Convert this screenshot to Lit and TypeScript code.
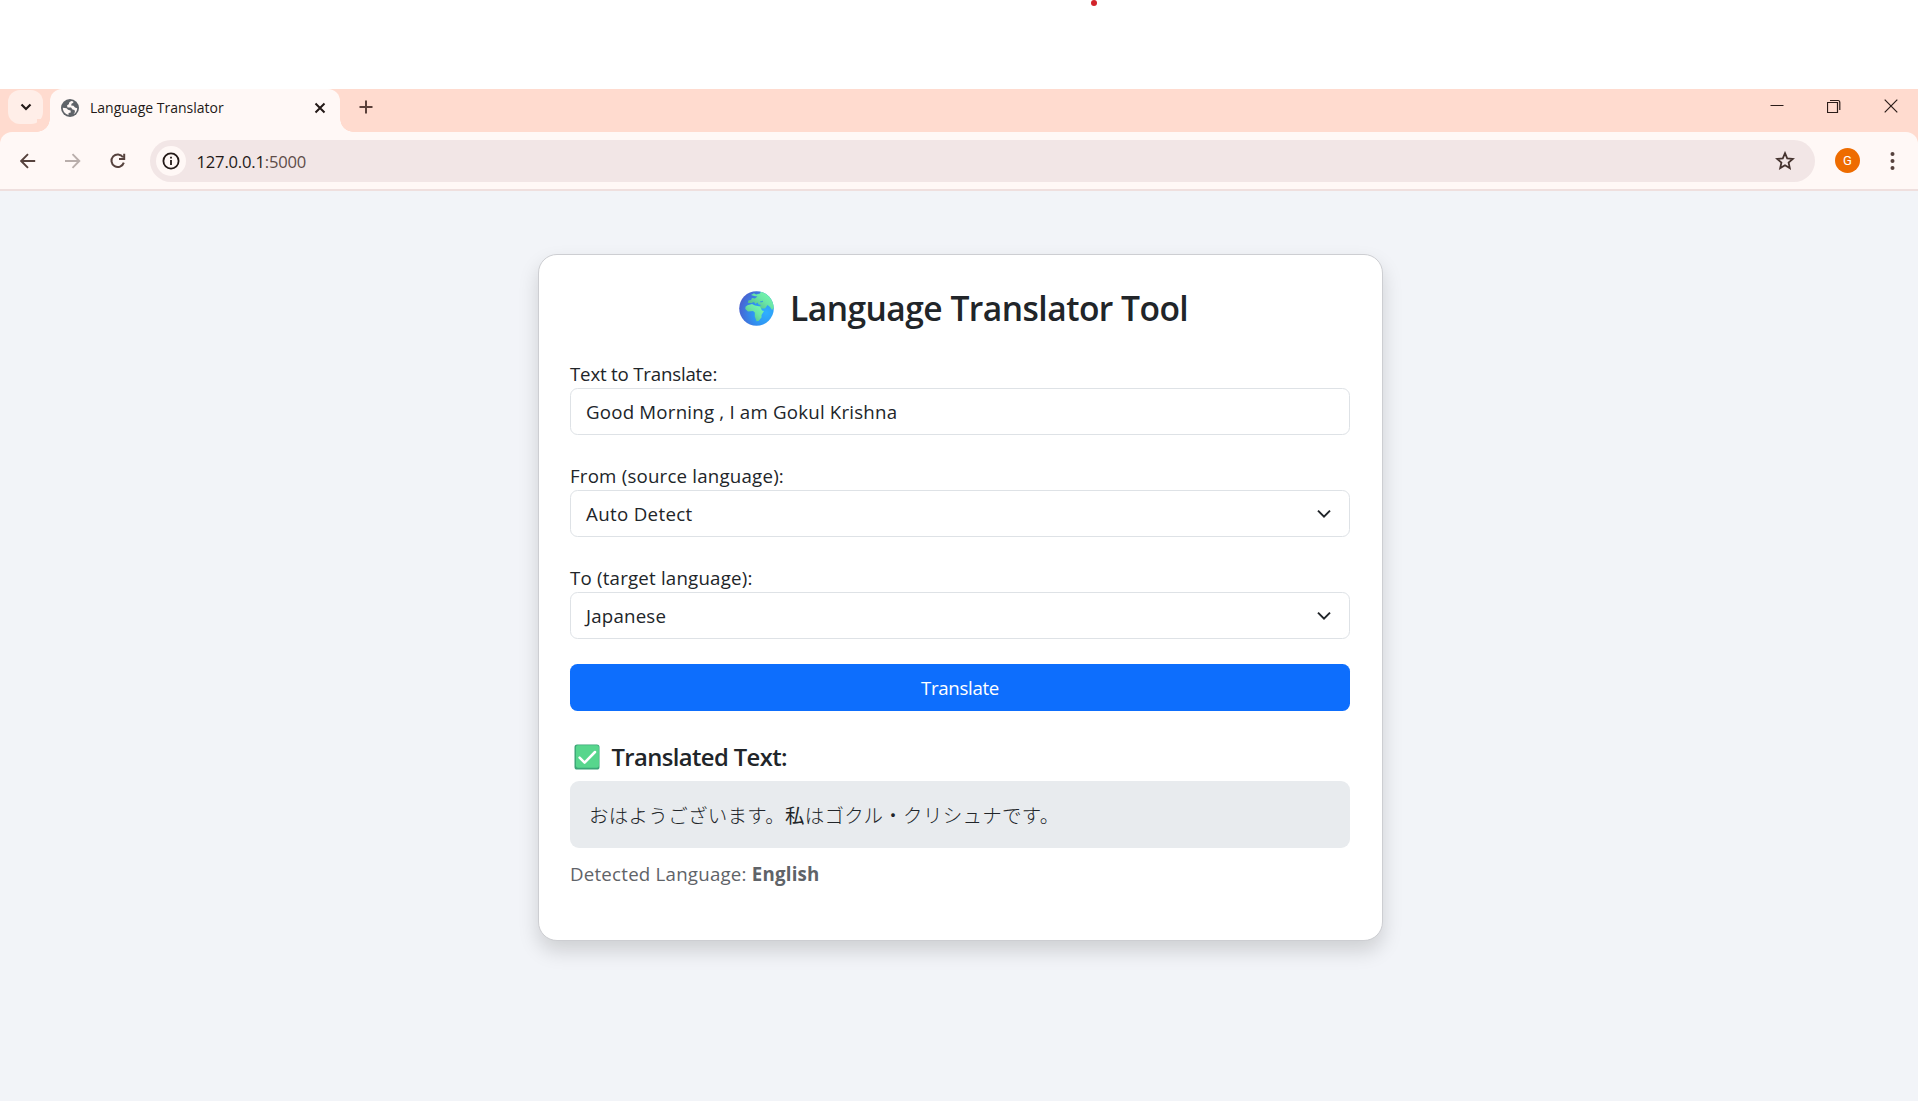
import { LitElement, html, css, svg } from "lit";
import { customElement } from "lit/decorators.js";

const globe = html`<svg class="globe" viewBox="0 0 35 35" width="35" height="35">
  <defs>
    <radialGradient id="sea" cx="0.78" cy="0.62" r="0.8">
      <stop offset="0" stop-color="#2fb0ff" /><stop offset="0.5" stop-color="#2f93f2" /><stop offset="1" stop-color="#4a60cf" />
    </radialGradient>
    <linearGradient id="land" x1="1" y1="0.1" x2="0.2" y2="0.9">
      <stop offset="0" stop-color="#76fdb0" /><stop offset="0.5" stop-color="#6be6a6" /><stop offset="1" stop-color="#55bb8c" />
    </linearGradient>
    <clipPath id="disc"><circle cx="17.5" cy="17.5" r="17.3" /></clipPath>
  </defs>
  <g clip-path="url(#disc)">
    <rect width="35" height="35" fill="url(#sea)" />
    <path fill="url(#land)" d="M12 4 L15 2.2 L17 3.4 L21 2.6 L22 0 H35 V17 L33 19 L31 16 L28.5 14 L26 17.5 L22 17.6 L20.4 15.3 L22.5 14 L19.5 13.5 L18.5 11.5 L16.5 13 L15 11 L12.5 12 L9 12 L9.3 9.5 L12 9 L13 7 L16 7.4 L18.5 5.4 L15 5 Z" />
    <path fill="url(#land)" d="M8.5 14.2 L13 13 L16 14.6 L21 15.5 L23 19.5 L25 20 L22.5 24 L22.5 26.5 L19.5 30 L17.5 30.3 L15.8 25.5 L15.8 21.5 L14 20 L9 20.5 L6.3 18 L6.5 15.8 Z" />
    <path fill="#3aa6d8" d="M21 10.2 L24 9.7 L24 10.9 L21.5 11.4 Z" />
  </g>
</svg>`;

const check = html`<svg class="check" viewBox="0 0 26 26" width="26" height="26">
  <rect x="0.5" y="0.5" width="25" height="25" rx="2.6" fill="#3ba477" />
  <rect x="1.9" y="1.2" width="23" height="22.6" rx="2" fill="#57d68d" />
  <path d="M5.6 13.6 L10.6 18.6 L21 8" fill="none" stroke="#fff" stroke-width="2.5" stroke-linecap="round" stroke-linejoin="round" />
</svg>`;

const line = (cls: string, w: number, h: number, d: string, sw = 2) =>
  html`<svg class=${cls} width=${w} height=${h} viewBox="0 0 ${w} ${h}" fill="none" stroke="currentColor" stroke-width=${sw}>${svg`<path d=${d} />`}</svg>`;

@customElement("browser-chrome")
export class BrowserChrome extends LitElement {
  static styles = css`
    :host { display: block; font-family: "Open Sans", "Noto Sans", sans-serif; color: #231917; }
    svg { display: block; flex: none; }
    .strip { display: flex; height: 43px; background: #ffdbcf; padding-left: 8px; }
    .search { width: 35px; height: 34px; margin-top: 1px; border-radius: 12px; background: #ffeee8; display: grid; place-items: center; }
    .tab { position: relative; display: flex; align-items: center; width: 290px; height: 43px; margin-left: 7px; padding: 0 14px 6px 11px; box-sizing: border-box; background: #fff8f6; border-radius: 12px 12px 0 0; }
    .tab::before, .tab::after { content: ""; position: absolute; bottom: 0; width: 13px; height: 13px; }
    .tab::before { right: 100%; background: radial-gradient(circle at 0 0, #ffdbcf 12.5px, #fff8f6 13px); }
    .tab::after { left: 100%; background: radial-gradient(circle at 100% 0, #ffdbcf 12.5px, #fff8f6 13px); }
    .title { margin-left: 11px; font-size: 14px; line-height: 20px; flex: 1; white-space: nowrap; }
    .plus { margin: 11px 0 0 18.5px; color: #5a403a; }
    .wins { display: flex; margin-left: auto; padding: 10px 20px 0 0; gap: 43px; color: #2b1c19; }
    .barwrap { background: #ffdbcf; }
    .bar { display: flex; align-items: center; height: 57px; background: #fff8f6; border-radius: 12px 12px 0 0; padding-left: 20px; color: #56423d; }
    .fwd { margin-left: 29px; color: #b9aeab; }
    .reload { margin-left: 29px; }
    .omni { display: flex; align-items: center; width: 1665px; height: 42px; margin-left: 24px; border-radius: 21px; background: #f2e6e6; box-sizing: border-box; padding: 0 20px 0 6px; color: #231917; }
    .info { width: 30px; height: 30px; border-radius: 50%; background: #fff8f6; display: grid; place-items: center; }
    .url { margin-left: 10.5px; padding-top: 2px; font-size: 16.6px; line-height: 24px; letter-spacing: -0.19px; flex: 1; }
    .port { color: #5e4c49; }
    .star { color: #45332f; }
    .avatar { width: 25px; height: 25px; border-radius: 50%; background: #ee6c00; color: #fff; font: 13px/25px Roboto, sans-serif; text-align: center; margin-left: 20px; }
    .dots { margin-left: 30px; }
    .edge { height: 2px; background: #efdfde; }
  `;
  render() {
    return html`
      <div class="strip">
        <div class="search">${line("", 12, 8, "M1.5 1.5 L6 6 L10.5 1.5", 2.2)}</div>
        <div class="tab">
          <svg width="18" height="18" viewBox="0 0 18 18"><circle cx="9" cy="9" r="9" fill="#5f6368" />
            <path fill="#fff8f6" d="M10.5 2 C9 2.5 7.5 3.5 8 5 L6 6.5 L6.5 8.5 H10 L11.5 10.5 L13.5 11 L14 13 L12.5 15.2 C14.8 14 16.2 11.7 16.2 9.2 L14 8.5 L12.5 6.8 L10.2 6.5 L10.5 4.8 L12.3 3.8 V2.5 Z M1.8 8.8 C1.8 12.5 4.3 15.3 7.5 16 L7.6 14 L9.8 13.5 L9.6 11.5 L7 10.8 L5.6 9.2 Z" /></svg>
          <span class="title">Language Translator</span>
          ${line("", 12, 12, "M1.5 1.5 L10.5 10.5 M10.5 1.5 L1.5 10.5", 2)}
        </div>
        ${line("plus", 14, 14, "M7 0.5 V13.5 M0.5 7 H13.5", 2)}
        <div class="wins">
          ${line("", 14, 15, "M0.5 6.5 H13.5", 1)}
          ${line("", 14, 15, "M0.5 3.5 H10.5 V13.5 H0.5 Z M3 1.5 H11 Q12.8 1.5 12.8 3.5 V11", 1.2)}
          ${line("", 14, 15, "M0.7 0.7 L13.3 13.3 M13.3 0.7 L0.7 13.3", 1.2)}
        </div>
      </div>
      <div class="barwrap"><div class="bar">
        ${line("", 16, 16, "M15.2 8 H1.5 M8 1.2 L1.2 8 L8 14.8", 1.9)}
        ${line("fwd", 16, 16, "M0 8 H14 M7.5 1.2 L14.3 8 L7.5 14.8", 1.9)}
        ${line("reload", 16, 16, "M13 4.2 A6.3 6.3 0 1 0 13.8 9.6 M14.2 0.8 V6 H9", 2)}
        <div class="omni">
          <div class="info"><svg width="18" height="18" viewBox="0 0 18 18" fill="none" stroke="#231917" stroke-width="1.8"><circle cx="9" cy="9" r="7.6" /><path d="M9 8 V13 M9 4.7 V6.5" /></svg></div>
          <span class="url">127.0.0.1<span class="port">:5000</span></span>
          ${line("star", 20, 20, "M10 2.2 L12.2 7.4 L17.8 7.9 L13.6 11.6 L14.8 17.1 L10 14.2 L5.2 17.1 L6.4 11.6 L2.2 7.9 L7.8 7.4 Z", 1.8)}
        </div>
        <div class="avatar">G</div>
        <svg class="dots" width="5" height="20" viewBox="0 0 5 20" fill="#56423d"><circle cx="2.5" cy="3" r="2" /><circle cx="2.5" cy="10" r="2" /><circle cx="2.5" cy="17" r="2" /></svg>
      </div></div>
      <div class="edge"></div>`;
  }
}

@customElement("translator-card")
export class TranslatorCard extends LitElement {
  static styles = css`
    :host { display: block; width: 845px; height: 687px; box-sizing: border-box; margin-left: 538px; padding: 29px 32px 0 31px; border: 1px solid #cdced2; border-radius: 19px; background: #fff; box-shadow: 0 10px 20px rgba(0, 0, 0, 0.15);
      font-family: "Open Sans", "Noto Sans", sans-serif; font-size: 18.7px; letter-spacing: 0.2px; color: #212529; }
    svg { display: block; flex: none; }
    .head { display: flex; align-items: center; height: 48px; padding-left: 168.5px; font-size: 33.6px; font-weight: 600; letter-spacing: -0.53px; white-space: nowrap; }
    .globe { margin-right: 16.5px; }
    .label { height: 30px; line-height: 32px; white-space: nowrap; }
    .first { margin-top: 26px; letter-spacing: -0.2px; }
    .field { display: flex; align-items: center; justify-content: space-between; height: 47px; box-sizing: border-box; border: 1px solid #dee2e6; border-radius: 7.5px; padding: 0 18px 0 15px; margin-bottom: 25px; }
    .auto { letter-spacing: 0.33px; }
    .btn { height: 47px; line-height: 47px; border-radius: 7.5px; background: #0d6efd; color: #fff; text-align: center; letter-spacing: -0.35px; }
    .sub { display: flex; align-items: center; height: 30px; margin-top: 31px; padding-left: 4px; font-size: 23.8px; font-weight: 600; letter-spacing: -0.6px; }
    .check { margin-right: 11.5px; }
    .result { height: 67px; line-height: 67px; margin-top: 9px; padding-left: 19px; background: #e8ebee; border-radius: 9px; font-family: "Noto Sans CJK JP", sans-serif; font-weight: 300; font-size: 19.5px; letter-spacing: 0.29px; }
    .kanji { font-weight: 400; }
    .detected { margin-top: 11px; line-height: 30px; color: #5f6368; letter-spacing: 0.22px; }
  `;
  render() {
    const chev = line("", 14, 10, "M1 1.6 L7 7.6 L13 1.6", 2);
    return html`
      <div class="head">${globe}<span>Language Translator Tool</span></div>
      <div class="label first">Text to Translate:</div>
      <div class="field"><span>Good Morning , I am Gokul Krishna</span></div>
      <div class="label">From (source language):</div>
      <div class="field"><span class="auto">Auto Detect</span>${chev}</div>
      <div class="label">To (target language):</div>
      <div class="field"><span>Japanese</span>${chev}</div>
      <div class="btn">Translate</div>
      <div class="sub">${check}<span>Translated Text:</span></div>
      <div class="result">おはようございます。<span class="kanji">私</span>はゴクル・クリシュナです。</div>
      <div class="detected">Detected Language: <b>English</b></div>`;
  }
}

@customElement("app-root")
export class AppRoot extends LitElement {
  static styles = css`
    :host { display: block; }
    .page { width: 1918px; height: 1101px; overflow: hidden; background: #f2f4f8; }
    .blank { height: 89px; background: #fff; position: relative; }
    .dot { position: absolute; left: 1091px; top: 0; width: 6px; height: 6px; border-radius: 50%; background: #d2232a; }
    .body { padding-top: 63px; }
  `;
  render() {
    return html`<div class="page">
      <div class="blank"><div class="dot"></div></div>
      <browser-chrome></browser-chrome>
      <div class="body"><translator-card></translator-card></div>
    </div>`;
  }
}
